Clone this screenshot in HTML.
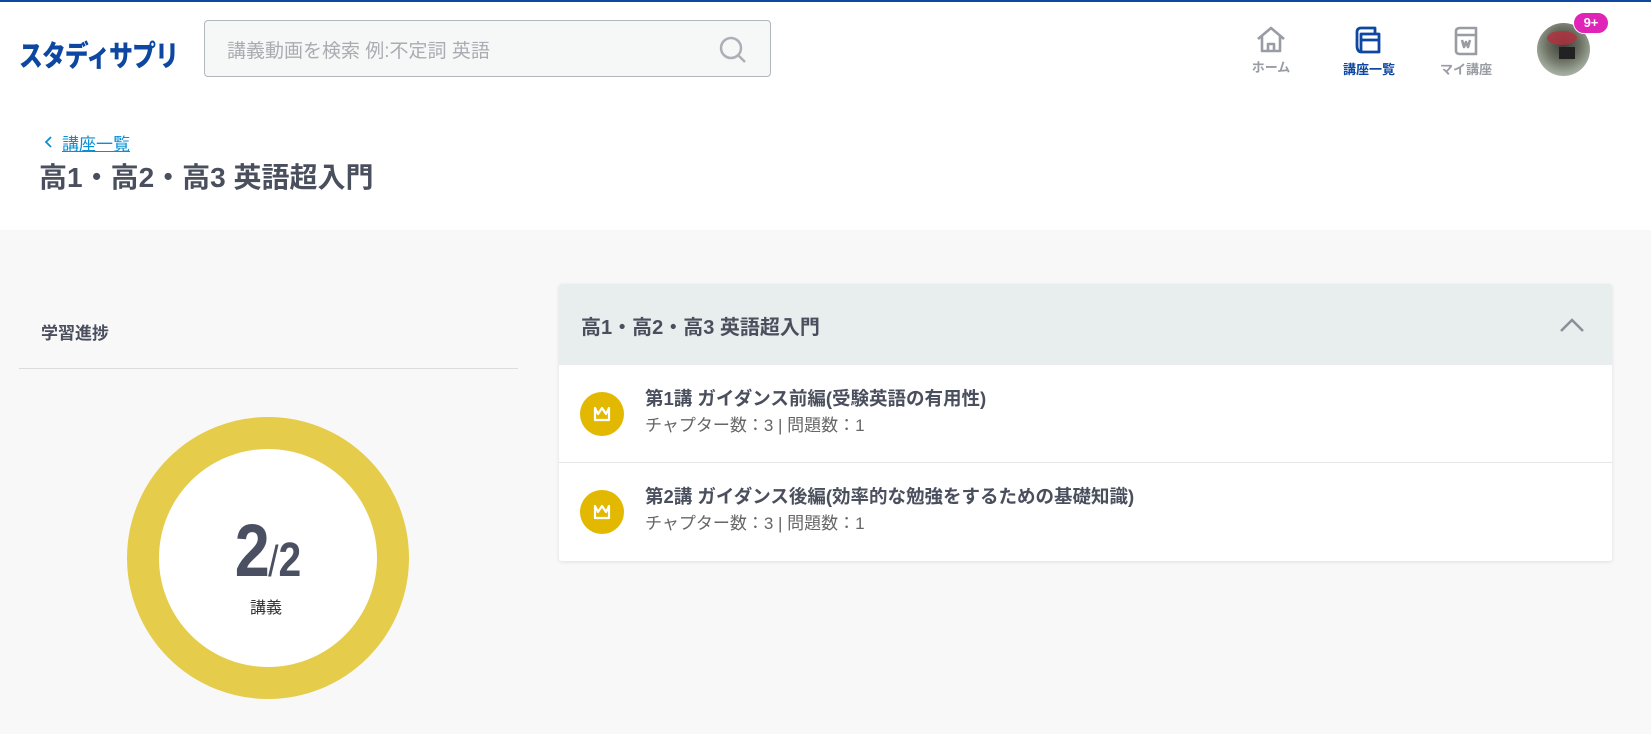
<!DOCTYPE html>
<html><head><meta charset="utf-8"><style>
*{margin:0;padding:0;box-sizing:border-box}
body{width:1651px;height:734px;overflow:hidden;background:#f8f8f8;font-family:"Liberation Sans","Noto Sans CJK JP",sans-serif;color:#4a4f5e;position:relative}
.abs{position:absolute}
header{position:absolute;left:0;top:0;width:1651px;height:96px;background:#fff;border-top:2px solid #0d47a1;box-shadow:0 2px 4px rgba(0,0,0,.05)}
.band{position:absolute;left:0;top:96px;width:1651px;height:134px;background:#fff}
.nav{position:absolute;top:24px;width:80px;text-align:center;font-size:13px;font-weight:bold;color:#9a9ca4}
.nav svg{display:block;margin:0 auto 3px}
</style></head><body>
<header>
<div class="abs" style="left:19px;top:31px;font-size:29px;font-weight:900;color:#0d47a1;letter-spacing:-1px;transform:scaleX(0.82);transform-origin:left;white-space:nowrap">スタディサプリ</div>
<div class="abs" style="left:204px;top:18px;width:567px;height:57px;border:1px solid #b0b7bd;border-radius:4px;background:#f6f7f7"></div>
<div class="abs" style="left:227px;top:34px;font-size:19px;color:#a9adb2">講義動画を検索 例:不定詞 英語</div>
<svg class="abs" style="left:718px;top:33px" width="30" height="30" viewBox="0 0 30 30" fill="none" stroke="#aab0b6" stroke-width="2.5"><circle cx="13" cy="13" r="10"/><path d="M20 20l7 7"/></svg>
<div class="nav" style="left:1231px"><svg width="32" height="28" viewBox="0 0 32 28" fill="none" stroke="#9a9ca4" stroke-width="2.6" stroke-linejoin="round"><path d="M3 13L16 2l13 11M7 10v15h18V10M13 25v-7h6v7"/></svg>ホーム</div>
<div class="nav" style="left:1329px;color:#0d47a1"><svg width="32" height="30" viewBox="0 0 32 30" fill="none" stroke="#0d47a1" stroke-width="2.8" stroke-linejoin="round"><path d="M4 6v14c0 4 2 6 4 6V8h18v18H8M4 6c0-3 2-4 4-4h14v6M8 14h18"/></svg>講座一覧</div>
<div class="nav" style="left:1426px"><svg width="28" height="30" viewBox="0 0 28 30" fill="none" stroke="#9a9ca4" stroke-width="2.6" stroke-linejoin="round"><path d="M4 5c0-2 2-3 4-3h16v26H8c-2 0-4-1-4-3zM4 9h20M10 14l2 7 2-5 2 5 2-7"/></svg>マイ講座</div>
<div class="abs" style="left:1537px;top:21px;width:53px;height:53px;border-radius:50%;background:radial-gradient(circle at 50% 40%,#3a3f3a,#6b7062 40%,#9ea89a 70%,#c9cfc8);overflow:hidden"><div style="position:absolute;left:10px;top:8px;width:30px;height:14px;background:#b4303f;border-radius:50%;opacity:.8"></div><div style="position:absolute;left:22px;top:24px;width:16px;height:12px;background:#222"></div></div>
<div class="abs" style="left:1573px;top:10px;width:36px;height:22px;border-radius:11px;background:#e024b8;color:#fff;font-size:13px;font-weight:bold;text-align:center;line-height:20px;border:1.5px solid #fff">9+</div>
</header>
<div class="band"></div>
<svg class="abs" style="left:44px;top:136px" width="10" height="12" viewBox="0 0 10 12" fill="none" stroke="#0a8ed4" stroke-width="1.8"><path d="M7 1L2 6l5 5"/></svg>
<div class="abs" style="left:62px;top:130px;font-size:17px;color:#0a8ed4;text-decoration:underline">講座一覧</div>
<div class="abs" style="left:39px;top:156px;font-size:28px;font-weight:bold;color:#4a4f5e;white-space:nowrap">高1・高2・高3 英語超入門</div>
<div class="abs" style="left:41px;top:319px;font-size:17px;font-weight:bold">学習進捗</div>
<div class="abs" style="left:19px;top:368px;width:499px;height:1px;background:#dcdcdc"></div>
<div class="abs" style="left:127px;top:417px;width:282px;height:282px;border-radius:50%;border:32px solid #e6cc4b;background:#fff"></div>
<div class="abs" style="left:208px;top:508px;width:120px;text-align:center;color:#4a5062;font-weight:bold;white-space:nowrap;transform:scaleX(0.85)"><span style="font-size:74px;letter-spacing:-2px">2</span><span style="font-size:44px;font-weight:normal">/</span><span style="font-size:48px">2</span></div>
<div class="abs" style="left:250px;top:594px;font-size:16px;color:#333">講義</div>
<div class="abs" style="left:559px;top:284px;width:1053px;height:277px;background:#fff;border-radius:3px;box-shadow:0 1px 4px rgba(0,0,0,.1);overflow:hidden">
<div style="height:81px;background:#e8eded;position:relative"><div style="position:absolute;left:22px;top:27px;font-size:20px;font-weight:bold;white-space:nowrap">高1・高2・高3 英語超入門</div>
<svg style="position:absolute;left:1000px;top:33px" width="26" height="16" viewBox="0 0 26 16" fill="none" stroke="#8a9096" stroke-width="2.5"><path d="M2 14L13 3l11 11"/></svg></div>
<div style="height:98px;border-bottom:1px solid #e6e6e6;position:relative">
<div style="position:absolute;left:21px;top:27px;width:44px;height:44px;border-radius:50%;background:#e2b800"></div>
<svg style="position:absolute;left:33px;top:39px" width="20" height="20" viewBox="0 0 20 20" fill="none" stroke="#fff" stroke-width="2.2" stroke-linejoin="round"><path d="M3 4l3 6 4-6 4 6 3-6v12H3z"/></svg>
<div style="position:absolute;left:86px;top:20px;font-size:18.5px;font-weight:bold;white-space:nowrap">第1講 ガイダンス前編(受験英語の有用性)</div>
<div style="position:absolute;left:86px;top:46px;font-size:17px;color:#666;white-space:nowrap">チャプター数：3 | 問題数：1</div></div>
<div style="height:98px;position:relative">
<div style="position:absolute;left:21px;top:27px;width:44px;height:44px;border-radius:50%;background:#e2b800"></div>
<svg style="position:absolute;left:33px;top:39px" width="20" height="20" viewBox="0 0 20 20" fill="none" stroke="#fff" stroke-width="2.2" stroke-linejoin="round"><path d="M3 4l3 6 4-6 4 6 3-6v12H3z"/></svg>
<div style="position:absolute;left:86px;top:20px;font-size:18.5px;font-weight:bold;white-space:nowrap">第2講 ガイダンス後編(効率的な勉強をするための基礎知識)</div>
<div style="position:absolute;left:86px;top:46px;font-size:17px;color:#666;white-space:nowrap">チャプター数：3 | 問題数：1</div></div>
</div>
</body></html>
